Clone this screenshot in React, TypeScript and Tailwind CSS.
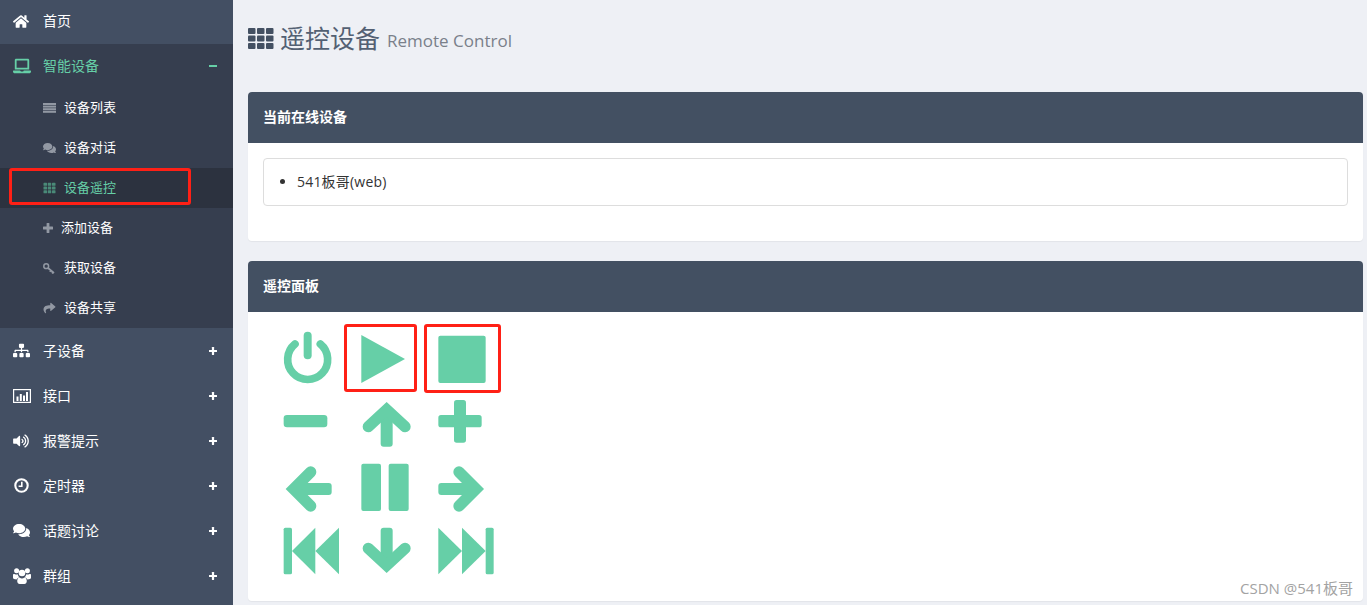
import React from 'react';
import { FaHome, FaLaptop, FaComments, FaTh, FaShare, FaSitemap, FaVolumeUp } from 'react-icons/fa';

type IconProps = { className?: string };

const ListBars: React.FC<IconProps> = ({ className }) => (
  <svg viewBox="0 0 13 10" fill="currentColor" className={className}>
    {[0, 2.6, 5.2, 7.8].map((y) => <rect key={y} x="0" y={y} width="13" height="2" />)}
  </svg>
);

const ThickPlus: React.FC<IconProps> = ({ className }) => (
  <svg viewBox="0 0 10 10" fill="currentColor" className={className}>
    <rect x="3.6" y="0" width="2.8" height="10" rx="0.5" />
    <rect x="0" y="3.6" width="10" height="2.8" rx="0.5" />
  </svg>
);

const KeyIcon: React.FC<IconProps> = ({ className }) => (
  <svg viewBox="0 0 12 11" fill="none" stroke="currentColor" className={className}>
    <circle cx="3.2" cy="3.2" r="2.4" strokeWidth="1.5" />
    <path d="M5 5L11 10M8 7.4L6.8 8.8M10 9.2L8.9 10.4" strokeWidth="1.7" />
  </svg>
);

const FramedChart: React.FC<IconProps> = ({ className }) => (
  <svg viewBox="0 0 18 14" fill="currentColor" className={className}>
    <rect x="0.6" y="0.6" width="16.8" height="12.8" fill="none" stroke="currentColor" strokeWidth="1.2" />
    <rect x="3.5" y="7.5" width="2" height="4.5" />
    <rect x="6.8" y="5" width="2" height="7" />
    <rect x="10" y="6.5" width="2" height="5.5" />
    <rect x="13" y="3" width="2" height="9" />
  </svg>
);

const ClockIcon: React.FC<IconProps> = ({ className }) => (
  <svg viewBox="0 0 15 15" fill="none" stroke="currentColor" className={className}>
    <circle cx="7.5" cy="7.5" r="6.2" strokeWidth="2.1" />
    <path d="M7.8 3.8V8.2H4.6" strokeWidth="1.6" />
  </svg>
);

const GroupIcon: React.FC<IconProps> = ({ className }) => (
  <svg viewBox="0 0 18 16" fill="currentColor" className={className}>
    <circle cx="3.6" cy="2.8" r="2.5" />
    <circle cx="14.4" cy="2.8" r="2.5" />
    <circle cx="9" cy="5" r="3.3" />
    <path d="M0 6.8C0 6 1 5.6 2 6.2C3 6.8 4 6.6 4.8 6.2C5 7.6 5.6 8.6 6.4 9.2C5 9.8 4 10.6 3.6 11.4C1.4 11.4 0 11 0 9.8Z" />
    <path d="M18 6.8C18 6 17 5.6 16 6.2C15 6.8 14 6.6 13.2 6.2C13 7.6 12.4 8.6 11.6 9.2C13 9.8 14 10.6 14.4 11.4C16.6 11.4 18 11 18 9.8Z" />
    <path d="M4.2 13C4.2 11 5.2 9.4 6.6 9.4C7.4 10 8.2 10.4 9 10.4C9.8 10.4 10.6 10 11.4 9.4C12.8 9.4 13.8 11 13.8 13C13.8 15 12.6 16 11.4 16H6.6C5.4 16 4.2 15 4.2 13Z" />
  </svg>
);

const subItems = [
  { label: '设备列表', icon: ListBars, size: 'h-[10px] w-[13px]', gap: 'ml-[8px]' },
  { label: '设备对话', icon: FaComments, size: 'h-[12px] w-[13px]', gap: 'ml-[8px]' },
  { label: '设备遥控', icon: FaTh, size: 'h-[12px] w-[13px]', gap: 'ml-[8px]', active: true },
  { label: '添加设备', icon: ThickPlus, size: 'h-[10px] w-[10px]', gap: 'ml-[8px]' },
  { label: '获取设备', icon: KeyIcon, size: 'h-[11px] w-[12px]', gap: 'ml-[9px]' },
  { label: '设备共享', icon: FaShare, size: 'h-[12px] w-[13px]', gap: 'ml-[8px]' },
];

const navItems = [
  { label: '子设备', icon: FaSitemap, size: 'h-[17px] w-[17px]', gap: 'ml-[13px]' },
  { label: '接口', icon: FramedChart, size: 'h-[14px] w-[18px]', gap: 'ml-[12px]' },
  { label: '报警提示', icon: FaVolumeUp, size: 'h-[14px] w-[16px]', gap: 'ml-[14px]' },
  { label: '定时器', icon: ClockIcon, size: 'ml-[1px] h-[15px] w-[15px]', gap: 'ml-[14px]' },
  { label: '话题讨论', icon: FaComments, size: 'h-[17px] w-[17px]', gap: 'ml-[13px]' },
  { label: '群组', icon: GroupIcon, size: 'h-[16px] w-[18px]', gap: 'ml-[12px]' },
];

const Sidebar: React.FC = () => (
  <aside className="w-[233px] shrink-0 bg-[#434f63] text-white">
    <div className="flex h-[44px] items-center pb-[2px] pl-[13px] text-[14px]">
      <FaHome className="h-[15px] w-[16px]" />
      <span className="ml-[14px] -translate-y-px">首页</span>
    </div>
    <div className="bg-[#363e4f]">
      <div className="flex h-[44px] items-center pb-[1px] pl-[13px] pr-[16px] text-[14px] text-[#66cfa7]">
        <FaLaptop className="h-[18px] w-[18px]" />
        <span className="ml-[12px] flex-1">智能设备</span>
        <span className="h-[2px] w-[8px] bg-[#66cfa7]" />
      </div>
      {subItems.map((item) => (
        <div
          key={item.label}
          className={`flex h-[40px] items-center pl-[43px] text-[13px] ${
            item.active ? 'bg-[#2c323f] text-[#66cfa7]' : ''
          }`}
        >
          <item.icon className={`${item.size} ${item.active ? 'text-[#4a8a78]' : 'text-[#9298a3]'}`} />
          <span className={item.gap}>{item.label}</span>
        </div>
      ))}
    </div>
    {navItems.map((item) => (
      <div key={item.label} className="flex h-[45px] items-center pl-[13px] pr-[16px] text-[14px]">
        <item.icon className={item.size} />
        <span className={`${item.gap} flex-1`}>{item.label}</span>
        <ThickPlus className="h-[8px] w-[8px]" />
      </div>
    ))}
  </aside>
);

const colX = [283, 361, 438];
const colW = [78, 77, 60];
const rows = [
  { y: 331, h: 68 },
  { y: 399, h: 64 },
  { y: 463, h: 63 },
  { y: 526, h: 50 },
];

// shape coordinates are in a 3x space, origin at (270,315) of the page
const Glyph: React.FC<{ col: number; row: number; children: React.ReactNode }> = ({ col, row, children }) => {
  const r = rows[row];
  return (
    <svg
      width={colW[col]}
      height={r.h}
      viewBox={`${(colX[col] - 270) * 3} ${(r.y - 315) * 3} ${colW[col] * 3} ${r.h * 3}`}
      fill="#66cfa7"
      className="block"
    >
      {children}
    </svg>
  );
};

const armProps = { fill: 'none', stroke: '#66cfa7', strokeWidth: 34, strokeLinecap: 'round' as const };

const RemotePad: React.FC = () => (
  <div className="grid w-fit grid-cols-[78px_77px_60px]">
    <Glyph col={0} row={0}>
      <path d="M75 87A60 60 0 1 0 151 87" fill="none" stroke="#66cfa7" strokeWidth="23" strokeLinecap="round" />
      <rect x="101" y="50" width="24" height="83" rx="12" />
    </Glyph>
    <Glyph col={1} row={0}>
      <polygon points="274,60 405,132 274,204" />
    </Glyph>
    <Glyph col={2} row={0}>
      <rect x="505" y="62" width="142" height="142" rx="6" />
    </Glyph>

    <Glyph col={0} row={1}>
      <rect x="41" y="300" width="131" height="37" rx="10" />
    </Glyph>
    <Glyph col={1} row={1}>
      <rect x="332" y="285" width="36" height="110" rx="9" />
      <path d="M295 335L350 284L405 335" {...armProps} />
    </Glyph>
    <Glyph col={2} row={1}>
      <rect x="552" y="255" width="36" height="128" rx="8" />
      <rect x="505" y="300" width="130" height="37" rx="8" />
    </Glyph>

    <Glyph col={0} row={2}>
      <rect x="75" y="504" width="110" height="36" rx="9" />
      <path d="M122 471L71 522L122 573" {...armProps} />
    </Glyph>
    <Glyph col={1} row={2}>
      <rect x="274" y="446" width="59" height="142" rx="6" />
      <rect x="356" y="446" width="60" height="142" rx="6" />
    </Glyph>
    <Glyph col={2} row={2}>
      <rect x="505" y="504" width="110" height="36" rx="9" />
      <path d="M567 471L618 522L567 573" {...armProps} />
    </Glyph>

    <Glyph col={0} row={3}>
      <rect x="41" y="638" width="25" height="140" rx="5" />
      <polygon points="66,708 136,638 136,778" />
      <polygon points="136,708 207,638 207,778" />
    </Glyph>
    <Glyph col={1} row={3}>
      <rect x="332" y="638" width="36" height="110" rx="9" />
      <path d="M295 700L350 751L405 700" {...armProps} />
    </Glyph>
    <Glyph col={2} row={3}>
      <polygon points="505,638 576,708 505,778" />
      <polygon points="576,638 647,708 576,778" />
      <rect x="647" y="638" width="24" height="140" rx="5" />
    </Glyph>
  </div>
);

const PanelHeader: React.FC<{ title: string }> = ({ title }) => (
  <div className="flex h-[51px] items-center rounded-t-[4px] bg-[#435062] px-[15px] pb-[2px] text-[14px] font-bold text-white">
    {title}
  </div>
);

const App: React.FC = () => (
  <div className="relative flex h-[605px] w-[1367px] overflow-hidden bg-[#eef0f5] font-['Open_Sans','Noto_Sans_CJK_SC',sans-serif] text-[#333]">
    <Sidebar />

    <main className="flex-1 pl-[15px] pr-[4px]">
      <div className="flex h-[76px] items-center">
        <svg width="26" height="21" viewBox="0 0 26 21" fill="#435062" className="mr-[6px]">
          {[0, 9, 18].map((x) =>
            [0, 7.5, 15].map((y) => <rect key={`${x}-${y}`} x={x} y={y} width="7.5" height="6" rx="1" />)
          )}
        </svg>
        <h1 className="text-[25px] font-normal leading-none text-[#536073]">遥控设备</h1>
        <span className="ml-[7px] mt-[5px] text-[17px] text-[#7a808a]">Remote Control</span>
      </div>

      <section className="mt-[16px] rounded-[4px] bg-white shadow-[0_1px_1px_rgba(0,0,0,0.05)]">
        <PanelHeader title="当前在线设备" />
        <div className="px-[15px] pb-[35px] pt-[15px]">
          <ul className="list-disc rounded-[4px] border border-[#ddd] pl-[33px] text-[14px] leading-[46px] tracking-[0.2px]">
            <li>541板哥(web)</li>
          </ul>
        </div>
      </section>

      <section className="mt-[20px] rounded-[4px] bg-white pb-[25px] shadow-[0_1px_1px_rgba(0,0,0,0.05)]">
        <PanelHeader title="遥控面板" />
        <div className="pl-[35px] pt-[19px]">
          <RemotePad />
        </div>
      </section>
    </main>

    {/* red annotation boxes drawn over the screenshot */}
    <div className="absolute left-[9px] top-[168px] h-[37px] w-[182px] rounded-[3px] border-[3px] border-[#ff2016]" />
    <div className="absolute left-[344px] top-[324px] h-[68px] w-[73px] rounded-[3px] border-[3px] border-[#ff2016]" />
    <div className="absolute left-[424px] top-[324px] h-[69px] w-[77px] rounded-[3px] border-[3px] border-[#ff2016]" />

    <div className="absolute right-[14px] top-[578px] text-[15px] leading-[20px] text-[#a3a3a3]">CSDN @541板哥</div>
  </div>
);

export default App;
